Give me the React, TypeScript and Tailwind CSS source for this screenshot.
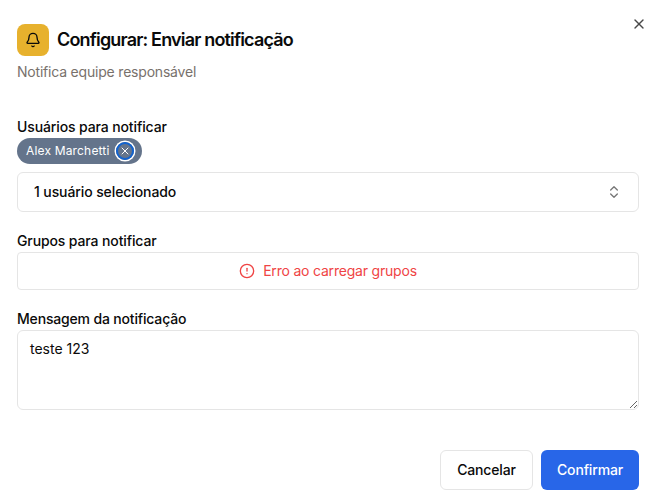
import { Bell, X, ChevronsUpDown, CircleAlert } from "lucide-react";

export default function App() {
  return (
    <main className="relative flex h-[499px] w-[655px] flex-col overflow-hidden bg-white px-4 pt-6 font-['Inter',sans-serif] text-sm text-[#0a0a0a]">
      <button aria-label="Fechar" className="absolute top-4 right-2 flex size-4 items-center justify-center text-[#484848]">
        <X size={16} />
      </button>
      <header className="pl-px">
        <div className="flex h-8 items-center gap-2">
          <span className="flex size-8 items-center justify-center rounded-lg bg-[#e7b12d]">
            <Bell size={16} />
          </span>
          <h1 className="text-lg font-semibold tracking-[-0.83px]">Configurar: Enviar notificação</h1>
        </div>
        <p className="mt-1.5 leading-5 tracking-[-0.2px] text-[#78716c]">Notifica equipe responsável</p>
      </header>
      <section className="mt-[35px] pl-px">
        <h2 className="h-[21px] leading-5 font-medium tracking-[-0.12px]">Usuários para notificar</h2>
        <div className="flex h-[26px] w-[125px] items-center rounded-full bg-[#64748b] pl-[9px] text-xs text-white">
          <span className="w-[90px] tracking-[0.17px]">Alex Marchetti</span>
          <button aria-label="Remover" className="flex size-[18px] items-center justify-center rounded-full border-2 border-[#1263cf] ring-[1.5px] ring-white">
            <X size={12} className="shrink-0" />
          </button>
        </div>
        <button className="mt-2 flex h-10 w-[622px] items-center justify-between rounded-md border border-[#e5e5e5] px-4 font-medium tracking-[-0.1px]">
          1 usuário selecionado
          <ChevronsUpDown size={16} className="text-[#777]" />
        </button>
      </section>
      <section className="mt-[19px] pl-px">
        <h2 className="h-[21px] leading-5 font-medium tracking-[-0.12px]">Grupos para notificar</h2>
        <div className="flex h-[38px] w-[622px] items-center justify-center gap-2 rounded border border-[#e5e5e5] tracking-[-0.2px] text-[#ef4444]">
          <CircleAlert size={16} />
          Erro ao carregar grupos
        </div>
      </section>
      <section className="mt-[19px] pl-px">
        <h2 className="h-[21px] leading-5 font-medium tracking-[-0.17px]">Mensagem da notificação</h2>
        <textarea defaultValue="teste 123" className="block h-20 w-[622px] rounded-md border border-[#e5e5e5] px-3 py-2 leading-5 outline-none" />
      </section>
      <footer className="mt-10 flex justify-end gap-2 font-medium tracking-[-0.15px]">
        <button className="h-10 w-[93px] rounded-md border border-[#e5e5e5]">Cancelar</button>
        <button className="h-10 w-[98px] rounded-md bg-[#2866e8] text-white">Confirmar</button>
      </footer>
    </main>
  );
}
